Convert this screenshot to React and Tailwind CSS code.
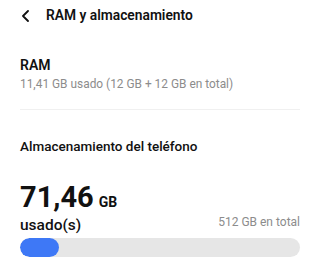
import React from 'react';

const App = () => {
  const used = 71.46;
  const total = 512;
  const pct = Math.max((used / total) * 100, 13);

  return (
    <div className="w-[320px] h-[275px] bg-white overflow-hidden" style={{ fontFamily: 'Roboto, "Noto Sans", sans-serif' }}>
      {/* Header */}
      <div className="flex items-center h-[31px] pl-[21px]">
        <svg width="9" height="12" viewBox="0 0 9 12" fill="none" className="mr-[16px]">
          <path d="M7 1 L2 6 L7 11" stroke="#111" strokeWidth="1.8" strokeLinecap="round" strokeLinejoin="round" />
        </svg>
        <h1 className="text-[13.8px] font-semibold text-[#111]">RAM y almacenamiento</h1>
      </div>

      {/* RAM */}
      <div className="px-[20px] pt-[25px]">
        <div className="text-[14px] font-semibold text-[#111] leading-[18px]">RAM</div>
        <div className="text-[11.9px] text-[#8c8c8c] leading-[16px] mt-[2px]">11,41 GB usado (12 GB + 12 GB en total)</div>
        <div className="h-px bg-[#f0f0f0] mt-[17px]" />
      </div>

      {/* Storage */}
      <div className="px-[20px] pt-[27px]">
        <div className="text-[13.5px] font-medium text-[#111] leading-[18px]">Almacenamiento del teléfono</div>
        <div className="flex items-baseline mt-[28px] leading-none">
          <span className="text-[29px] font-bold text-[#111]">71,46</span>
          <span className="text-[14px] font-bold text-[#111] ml-[5px]">GB</span>
        </div>
        <div className="flex items-end justify-between mt-[3px]">
          <span className="text-[15.5px] font-medium text-[#111] leading-[16px]">usado(s)</span>
          <span className="text-[12px] text-[#8c8c8c] leading-[14px] mb-[4px]">512 GB en total</span>
        </div>
        <div className="h-[19px] rounded-full bg-[#e6e6e6] mt-[5px] overflow-hidden">
          <div className="h-full rounded-full bg-[#3e78f6]" style={{ width: `${pct}%` }} />
        </div>
      </div>
    </div>
  );
};

export default App;
